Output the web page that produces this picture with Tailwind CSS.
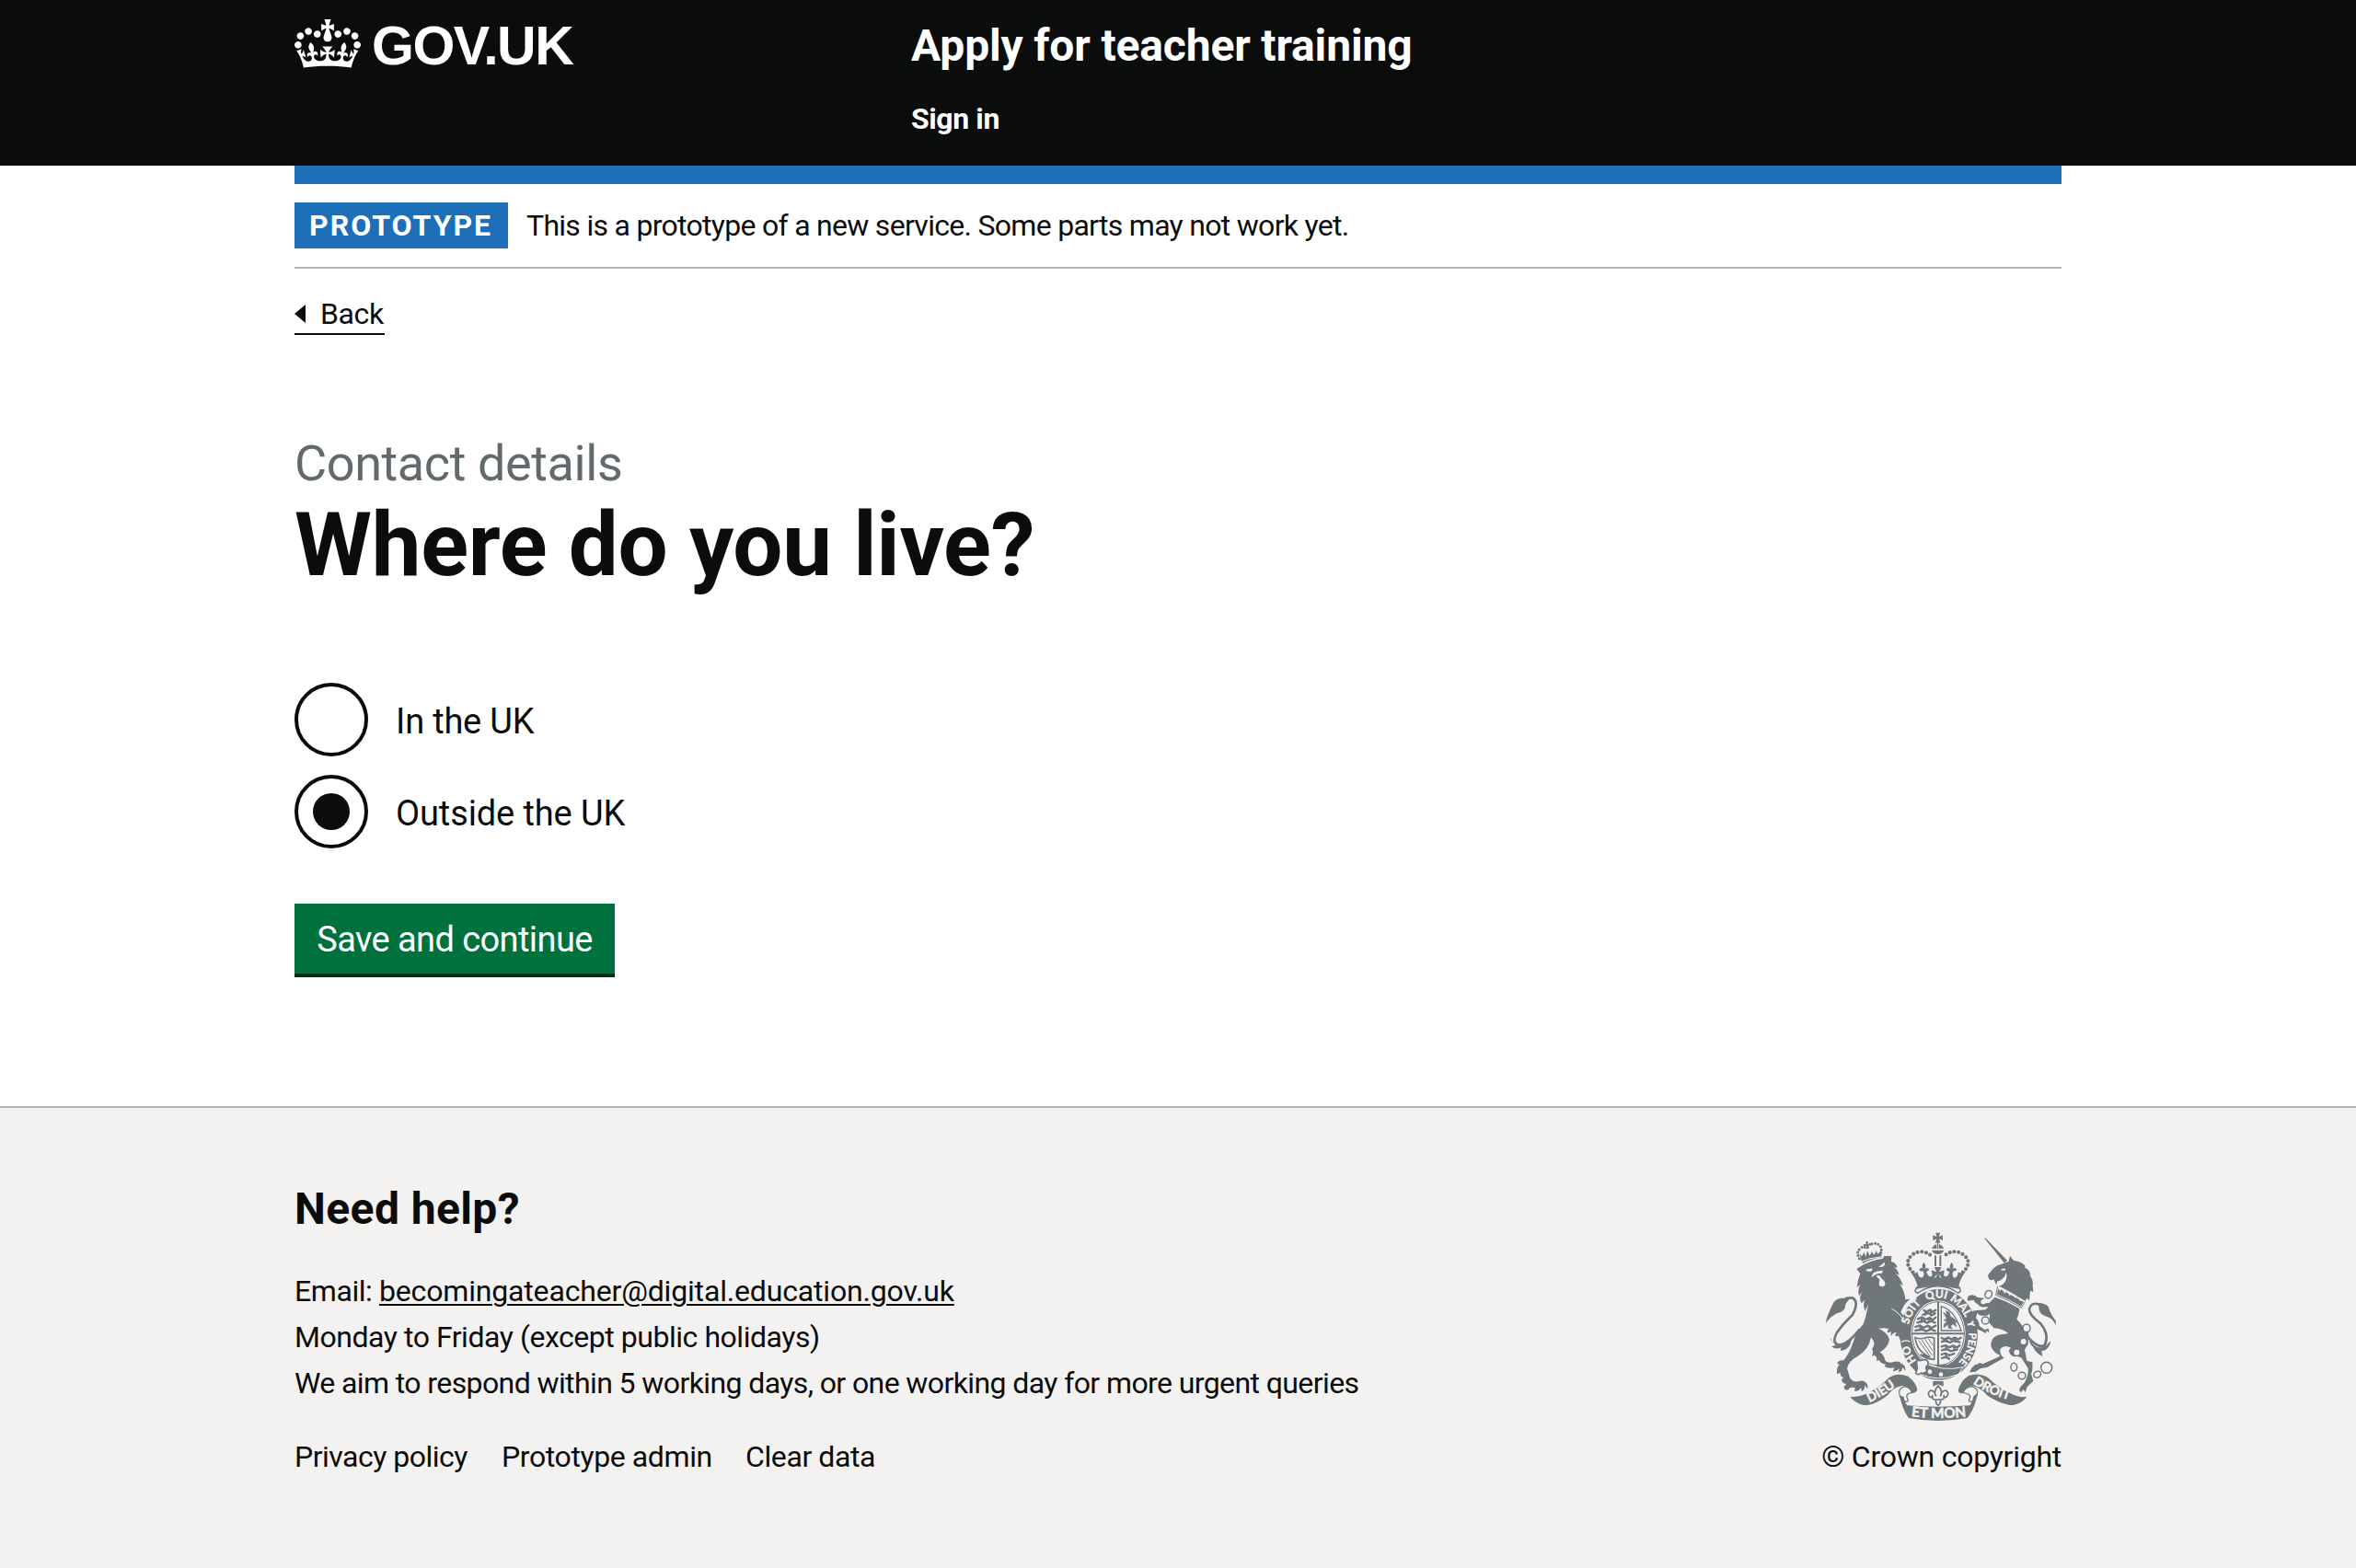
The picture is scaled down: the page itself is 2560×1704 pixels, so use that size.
<!DOCTYPE html>
<html lang="en">
<head>
<meta charset="utf-8">
<title>Where do you live? - Apply for teacher training</title>
<script src="https://cdn.jsdelivr.net/npm/@tailwindcss/browser@4"></script>
</head>
<body class="bg-[#f3f2f1] text-[#0b0c0c] font-['Roboto',sans-serif] text-[32px] leading-[50px]">
<header class="h-[180px] bg-[#0b0c0c] text-white">
  <div class="mx-auto flex w-[1920px]">
    <a class="flex h-[90px] w-[670px] items-start pt-[21px]">
      <svg class="h-[53px] w-[72px]" viewBox="0 0 132 97" fill="currentColor"><path d="M25 30.2c3.5 1.5 7.7-.2 9.1-3.7 1.5-3.6-.2-7.8-3.9-9.2-3.6-1.4-7.6.3-9.1 3.9-1.4 3.5.3 7.5 3.9 9zM9 39.5c3.6 1.5 7.8-.2 9.2-3.7 1.5-3.6-.2-7.8-3.9-9.1-3.6-1.5-7.6.2-9.1 3.8-1.4 3.5.3 7.5 3.8 9zM4.4 57.2c3.5 1.5 7.7-.2 9.1-3.8 1.5-3.6-.2-7.7-3.9-9.1-3.5-1.5-7.6.3-9.1 3.8-1.4 3.5.3 7.6 3.9 9.1zm38.3-21.4c3.5 1.5 7.7-.2 9.1-3.8 1.5-3.6-.2-7.7-3.9-9.1-3.6-1.5-7.6.3-9.1 3.8-1.3 3.6.4 7.7 3.9 9.1zm64.4-5.6c-3.6 1.5-7.8-.2-9.1-3.7-1.5-3.6.2-7.8 3.8-9.2 3.6-1.4 7.7.3 9.2 3.9 1.3 3.5-.4 7.5-3.9 9zm15.9 9.3c-3.6 1.5-7.7-.2-9.1-3.7-1.5-3.6.2-7.8 3.7-9.1 3.6-1.5 7.7.2 9.2 3.8 1.5 3.5-.3 7.5-3.8 9zm4.7 17.7c-3.6 1.5-7.8-.2-9.2-3.8-1.5-3.6.2-7.7 3.9-9.1 3.6-1.5 7.7.3 9.2 3.8 1.3 3.5-.4 7.6-3.9 9.1zM89.3 35.8c-3.6 1.5-7.8-.2-9.2-3.8-1.4-3.6.2-7.7 3.9-9.1 3.6-1.5 7.7.3 9.2 3.8 1.4 3.6-.3 7.7-3.9 9.1zM69.7 17.7l8.9 4.7V9.3l-8.9 2.8c-.2-.3-.5-.6-.9-.9L72.4 0H59.6l3.5 11.2c-.3.3-.6.5-.9.9l-8.8-2.8v13.1l8.8-4.7c.3.3.6.7.9.9l-5 15.4v.1c-.2.8-.4 1.6-.4 2.4 0 4.1 3.1 7.5 7 8.1h.2c.3 0 .7.1 1 .1.4 0 .7 0 1-.1h.2c4-.6 7.1-4.1 7.1-8.1 0-.8-.1-1.7-.4-2.4V34l-5.1-15.4c.4-.2.7-.6 1-.9zM66 92.8c16.9 0 32.8 1.1 47.1 3.2 4-16.9 8.9-26.7 14-33.5l-9.6-3.4c1 4.9 1.1 7.2 0 10.2-1.5-1.4-3-4.3-4.2-8.7L108.6 76c2.8-2 5-3.2 7.5-3.3-4.4 9.4-10 11.9-13.6 11.2-4.3-.8-6.3-4.6-5.6-7.9 1-4.7 5.7-5.9 8-.5 4.3-8.7-3-11.4-7.6-8.8 7.1-7.2 7.9-13.5 2.1-21.1-8 6.1-8.1 12.3-4.5 20.8-4.7-5.4-12.1-2.5-9.5 6.2 3.4-5.2 7.9-2 7.2 3.1-.6 4.3-6.4 7.8-13.5 7.2-10.3-.9-10.9-8-11.2-13.8 2.5-.5 7.1 1.8 11 7.3L80.2 60c-4.1 4.4-8 5.3-12.3 5.4 1.4-4.4 8-11.6 8-11.6H55.5s6.4 7.2 7.9 11.6c-4.2-.1-8-1-12.3-5.4l1.4 16.4c3.9-5.5 8.5-7.7 10.9-7.3-.3 5.8-.9 12.8-11.1 13.8-7.2.6-12.9-2.9-13.5-7.2-.7-5 3.8-8.3 7.1-3.1 2.7-8.7-4.6-11.6-9.4-6.2 3.7-8.5 3.6-14.7-4.6-20.8-5.8 7.6-5 13.9 2.2 21.1-4.7-2.6-11.9.1-7.7 8.8 2.3-5.5 7.1-4.2 8.1.5.7 3.3-1.3 7.1-5.7 7.9-3.5.7-9-1.8-13.5-11.2 2.5.1 4.7 1.3 7.5 3.3l-4.7-15.4c-1.2 4.4-2.7 7.2-4.3 8.7-1.1-3-.9-5.3 0-10.2l-9.5 3.4c5 6.9 9.9 16.7 14 33.5 14.8-2.1 30.8-3.2 47.7-3.2z"/></svg>
      <span class="ml-[12px] pt-[3px] font-['Liberation_Sans',sans-serif] text-[59px] leading-[52px] font-bold tracking-[-1.5px]">GOV.UK</span>
    </a>
    <div class="flex flex-col pt-[20px]">
      <a class="text-[48px] leading-[60px] font-bold tracking-[-0.16px]">Apply for teacher training</a>
      <a class="mt-[29px] leading-[40px] font-bold tracking-[-0.4px]">Sign in</a>
    </div>
  </div>
</header>
<main class="h-[1022px] bg-white">
  <div class="mx-auto flex w-[1920px] flex-col items-start">
    <div class="h-[20px] w-full bg-[#1d70b8]"></div>
    <div class="flex w-full border-b-2 border-[#b1b4b6] py-[20px]">
      <strong class="w-[232px] bg-[#1d70b8] pl-[16px] font-bold tracking-[2px] text-white">PROTOTYPE</strong>
      <span class="ml-[20px] tracking-[-0.71px]">This is a prototype of a new service. Some parts may not work yet.</span>
    </div>
    <a class="mt-[28px] flex h-[44px] w-[98px] items-center border-b-2 border-[#0b0c0c] leading-[42px]">
      <svg class="h-[20px] w-[12px]" viewBox="0 0 12 20"><path d="M0 10 12 0V20Z" fill="#0b0c0c"/></svg>
      <span class="ml-[16px] tracking-[-0.4px]">Back</span>
    </a>
    <span class="mt-[110px] text-[54px] leading-[60px] tracking-[-0.4px] text-[#626a6e]">Contact details</span>
    <h1 class="mt-[8px] text-[96px] leading-[100px] font-bold tracking-[-0.3px]">Where do you live?</h1>
    <div class="mt-[100px] flex flex-col gap-[20px] text-[38px]">
      <label class="flex h-[80px] items-center">
        <span class="size-[80px] rounded-full border-4 border-[#0b0c0c]"></span>
        <span class="ml-[30px] pt-[3px] tracking-[-0.2px]">In the UK</span>
      </label>
      <label class="flex h-[80px] items-center">
        <span class="flex size-[80px] items-center justify-center rounded-full border-4 border-[#0b0c0c]"><span class="size-[40px] rounded-full bg-[#0b0c0c]"></span></span>
        <span class="ml-[30px] pt-[3px] tracking-[-0.12px]">Outside the UK</span>
      </label>
    </div>
    <button class="mt-[60px] h-[80px] w-[348px] border-b-4 border-[#002d18] bg-[#00703c] pt-[2px] text-[38px] tracking-[-0.58px] text-white">Save and continue</button>
  </div>
</main>
<footer class="h-[502px] border-t-2 border-[#b1b4b6] pt-[80px]">
  <div class="mx-auto flex w-[1920px] justify-between">
    <div>
      <h2 class="text-[48px] leading-[60px] font-bold tracking-[0.4px]">Need help?</h2>
      <p class="mt-[34px] flex tracking-[-0.17px]"><span class="w-[92px] tracking-[-0.42px]">Email:</span><a class="underline decoration-2 underline-offset-[3px]">becomingateacher@digital.education.gov.uk</a></p>
      <p class="tracking-[-0.46px]">Monday to Friday (except public holidays)</p>
      <p class="tracking-[-0.6px]">We aim to respond within 5 working days, or one working day for more urgent queries</p>
      <div class="mt-[30px] flex">
        <a class="w-[225px] tracking-[-0.5px]">Privacy policy</a>
        <a class="w-[265px] tracking-[-0.4px]">Prototype admin</a>
        <a class="tracking-[-0.4px]">Clear data</a>
      </div>
    </div>
    <div class="flex flex-col items-end pt-[56px]">
      <!-- Royal coat of arms -->
      <svg class="mr-[6px] h-[204px] w-[250px] overflow-visible font-['Lato',sans-serif] font-bold" viewBox="72 60 750 612" fill="#6f777b">
        <!-- lion's crown -->
        <g>
          <path d="M185 146Q216 130 251 125L255 139Q222 144 193 158Z"/>
          <path d="M188 148 180 126 190 136 196 122 202 138 207 118 215 134 222 120 229 134 236 117 241 130 252 116 250 132Z"/>
          <path d="M202 88 210 87 208 96 217 92 220 101 211 100 213 110 203 112 205 102 196 105 194 96 203 97Z"/>
          <g stroke="#6f777b" stroke-width="9" stroke-linecap="round" fill="none" stroke-dasharray="0 10.5"><path d="M181 143Q168 122 186 109Q196 100 205 112"/><path d="M222 95Q240 90 250 104Q256 114 250 128"/></g>
        </g>
        <!-- lion -->
        <path d="M172 177 195 163Q228 146 258 143L262 135 286 135 285 153Q301 156 305 173L294 171Q308 181 311 197L299 191Q319 210 323 232L312 225Q329 248 331 277L347 275Q327 288 316 318Q340 345 346 376Q351 396 347 412Q342 414 340 406Q331 416 318 414L324 406Q312 404 311 392Q303 402 297 392L303 384Q290 384 284 397L284 380Q276 387 272 383L276 372Q262 368 244 371Q275 385 279 407Q276 432 248 448Q262 458 266 477Q277 485 293 480Q312 476 318 486Q333 490 331 510L323 497Q320 512 309 514L311 502Q301 513 291 509L295 499Q275 503 263 495L267 488Q252 487 245 474L237 478Q241 463 229 458L222 463Q228 446 222 438Q238 420 219 400Q212 440 175 462Q147 477 141 500L150 531Q157 546 176 544Q190 538 199 545Q211 552 207 568L199 556Q199 573 188 576L187 563Q178 579 164 574L168 565Q148 560 147 569Q132 577 131 561L139 552Q124 550 123 536L131 531Q117 528 119 515L108 520Q106 498 116 489L109 486Q111 474 130 475Q151 448 160 418Q174 376 194 357Q204 330 210 291L200 314Q190 294 200 277L188 289Q178 272 190 252L180 264Q174 248 184 229L173 237Q175 212 184 192Z"/>
        <g fill="#f3f2f1"><path d="M201 179 222 175Q226 186 215 185Q205 186 201 179ZM244 171 263 155Q267 166 257 170ZM226 190Q240 181 258 182L253 193Q242 188 234 196L220 205ZM236 199Q247 193 252 207Q269 219 264 230Q257 239 246 230Q244 221 248 211Q240 209 236 199Z"/></g>
        <path d="M174 158Q216 139 257 137" stroke="#f3f2f1" stroke-width="3" fill="none"/>
        <!-- lion's tail -->
        <path d="M131 282Q159 260 169 283Q174 298 159 326Q128 355 108 384Q88 423 119 425Q148 419 182 374" stroke="#6f777b" stroke-width="8" fill="none"/>
        <path d="M150 272Q141 263 131 273Q112 270 98 285Q88 302 74 340L72 354Q84 335 108 322Q137 316 136 292ZM95 414Q86 411 88 401Q92 421 109 421Q138 421 156 405L151 424Q139 445 119 443L122 433Q105 442 90 430Q100 429 105 424Z"/>
        <!-- royal crown -->
        <g>
          <path d="M430 59H444L441 72 453 67V84L441 79 445 92H429L433 79 421 84V67L433 72Z"/>
          <path d="M435 93H439V112H435ZM417 110Q422 100 433 96V111ZM457 110Q452 100 441 96V111ZM417 116H457Q451 129 437 129Q423 129 417 116ZM426 133H432V168H426ZM442 133H448V168H442Z"/>
          <path d="M371 232Q364 208 344 181L360 193 371 187Q373 207 386 205Q396 198 388 184Q381 187 376 179Q382 168 389 177Q382 166 391 156Q401 166 395 178Q403 169 409 179Q403 187 399 185Q407 208 419 199L416 181 433 187 425 171H449L441 187 458 181 456 199Q469 208 475 185Q467 187 464 179Q470 169 478 177Q473 166 482 156Q492 168 484 178Q492 169 499 179Q494 186 488 184Q481 199 490 206Q502 206 503 187L516 193 531 181Q510 207 505 232L512 240Q437 221 363 240Z"/>
          <path d="M424 208 435 193 431 204ZM450 208 439 193 443 204Z" fill="#f3f2f1"/>
          <g stroke="#6f777b" stroke-width="12.5" stroke-linecap="round" fill="none" stroke-dasharray="0 14.3"><path d="M356 188Q322 155 356 129Q385 111 413 132"/><path d="M518 188Q554 155 518 129Q490 111 461 132"/></g>
          <path d="M371 256Q358 252 367 240Q437 223 507 240Q516 252 502 255Q470 232 437 233Q404 232 371 256Z" fill="#f3f2f1" stroke="#6f777b" stroke-width="4.5"/>
        </g>
        <!-- garter -->
        <ellipse cx="440" cy="391" rx="127" ry="148"/>
        <path d="M282 303Q330 325 346 376Q351 396 347 412L318 416 302 380Z"/>
        <path d="M286 306Q318 324 330 354" stroke="#f3f2f1" stroke-width="3" fill="none"/>
        <path d="M318 416Q328 406 346 414" stroke="#f3f2f1" stroke-width="4" fill="none"/>
        <ellipse cx="438" cy="388" rx="89" ry="108" fill="#f3f2f1"/>
        <defs>
          <path id="belt" d="M438 511A100 120 0 0 1 338 391A100 120 0 0 1 438 271A100 120 0 0 1 538 391A100 120 0 0 1 438 511" pathLength="360"/>
          <path id="dieu" d="M214 612Q264 590 316 548"/>
          <path id="droit" d="M551 549Q594 584 682 608"/>
          <path id="mon" d="M350 658Q437 668 527 658"/>
        </defs>
        <g fill="#f3f2f1" stroke="#f3f2f1" stroke-width="1.2" font-size="36" text-anchor="middle">
          <text><textPath href="#belt" startOffset="57">HO</textPath></text>
          <text><textPath href="#belt" startOffset="128">SOIT</textPath></text>
          <text><textPath href="#belt" startOffset="177">QUI</textPath></text>
          <text><textPath href="#belt" startOffset="220">MAL</textPath></text>
          <text><textPath href="#belt" startOffset="253">Y</textPath></text>
          <text font-size="34"><textPath href="#belt" startOffset="294">PENSE</textPath></text>
        </g>
        <!-- quartered shield -->
        <g fill="none" stroke="#6f777b">
          <ellipse cx="438" cy="388" rx="85" ry="104" stroke-width="3"/>
          <path d="M438 284V490" stroke-width="6"/><path d="M352 388H524" stroke-width="6"/>
          <g stroke-width="7" stroke-linecap="round" stroke-linejoin="round">
            <path d="M391 312 402 316 412 310 420 317 430 311M388 326 408 321 418 328 428 322M372 340 386 334 396 342 410 336 420 343 430 335M370 352 388 346 402 353 414 347 428 352M364 366 378 361 390 369 404 362 416 369 430 362M364 378 384 374 398 380 414 374 428 379M396 314V326M414 312V328M384 338V350M408 338V350M380 364V376M410 364V376"/>
            <path d="M449 402 460 406 472 400 480 407 492 401 504 407 512 401M450 414 464 411 476 417 490 411 508 416M449 430 462 426 474 433 486 427 500 433 508 426M450 442 466 438 478 445 500 440M449 456 462 452 474 459 490 453M450 468 462 464 474 470M466 403V414M494 403V414M464 430V440M490 430V442M464 454V466"/>
          </g>
          <path d="M448 299Q490 310 513 378H448Z" stroke-width="4"/>
          <path d="M455 318 466 326 464 314 474 318 478 332 490 340 500 352 492 350 498 366 486 356 478 364 484 372 472 370 470 358 456 368 458 356 468 348 456 344 466 340Z" fill="#6f777b" stroke-width="2"/>
          <path d="M363 401Q380 407 395 402 408 397 425 402V472Q396 470 380 456L410 464Q368 446 363 401Z" stroke-width="5"/>
          <path d="M374 410 414 466M384 408 418 458M395 406 420 444M406 404 421 426" stroke-width="3"/>
        </g>
        <!-- buckle -->
        <path d="M380 478Q450 514 520 497L504 520Q440 548 373 518Z" stroke="#f3f2f1" stroke-width="3"/>
        <path d="M368 484Q364 473 378 476L396 472Q409 478 404 490L398 497 401 510Q394 520 382 516Q372 526 365 516L370 502Z" fill="#f3f2f1" stroke="#6f777b" stroke-width="5"/>
        <circle cx="411" cy="512" r="7" fill="#f3f2f1"/><circle cx="447" cy="521" r="7" fill="#f3f2f1"/>
        <path d="M426 488H466L458 496H434Z"/>
        <!-- fleur-de-lis -->
        <path d="M421 543H455V560L438 553 421 560Z"/>
        <path d="M438 558Q455 576 445 592Q451 571 464 574Q474 580 467 592Q460 601 456 588Q460 604 446 603H430Q416 604 420 588Q416 601 409 592Q402 580 412 574Q425 571 431 592Q421 576 438 558ZM431 604Q429 617 438 622Q447 617 445 604" fill="#f3f2f1" stroke="#6f777b" stroke-width="5"/>
        <!-- motto ribbon -->
        <path d="M150 593Q180 597 213 580Q250 560 278 531Q305 513 340 527Q369 550 370 573Q360 585 352 581Q334 551 312 560Q292 564 274 588Q240 616 207 621H196Q172 617 150 593Z"/>
        <path d="M728 593Q700 599 668 580Q632 563 600 531Q571 513 537 525Q508 545 503 575Q510 586 519 581Q533 551 559 560Q580 568 599 590Q640 616 672 621H683Q709 616 728 593Z"/>
        <path d="M329 560Q306 566 312 587Q318 606 334 610Q344 609 337 598Q330 584 352 580Q347 563 329 560ZM547 560Q571 566 565 587Q559 606 544 610Q534 609 541 598Q548 586 519 580Q526 563 547 560Z" fill="#f3f2f1" stroke="#6f777b" stroke-width="4"/>
        <path d="M326 594Q327 610 337 622Q437 630 541 622Q551 610 552 594L567 580Q558 632 533 663Q437 681 342 663Q322 637 312 589Z"/>
        <g fill="#f3f2f1" stroke="#f3f2f1" stroke-width="1.5">
          <text font-size="42"><textPath href="#dieu">DIEU</textPath></text>
          <text font-size="42"><textPath href="#droit">DROIT</textPath></text>
          <text font-size="46"><textPath href="#mon">ET MON</textPath></text>
        </g>
        <!-- unicorn -->
        <path d="M587 75 594 78 663 149 654 158Z"/>
        <path d="M601 202Q598 197 609 186Q622 168 640 163L668 153 672 134 684 149Q712 153 723 169L718 171Q738 180 739 199L734 196Q749 211 746 231L748 252 738 248 735 281Q727 266 722 283Q680 254 634 232L649 225Q663 209 660 188Q656 206 637 216Q628 214 628 230L619 211 612 214Q602 213 601 202Z"/>
        <path d="M641 181Q649 172 658 177L655 182ZM659 188Q667 209 649 227Q634 235 631 232Q659 216 659 188Z" fill="#f3f2f1"/>
        <path d="M631 237 640 249 645 240 655 257 662 247 671 265 679 256 688 272 697 264 703 280 721 284 711 304Q674 284 626 263Z"/>
        <path d="M634 236 722 284" stroke="#f3f2f1" stroke-width="5" fill="none"/>
        <path d="M632 234 626 262Q670 279 709 304L721 284" stroke="#f3f2f1" stroke-width="7" fill="none"/>
        <path d="M632 234 626 262Q670 279 709 304L721 284" stroke="#6f777b" stroke-width="3" fill="none"/>
        <path d="M623 269Q668 285 703 307Q702 325 694 341Q714 359 725 386Q734 400 731 422L720 440Q724 458 727 477L745 481Q747 510 741 520L748 542 728 562 722 580 716 570 709 578Q699 579 705 563L720 547Q734 521 731 501Q718 481 710 467Q697 460 690 463Q673 462 668 443L675 434Q655 423 640 438Q640 462 653 467Q628 480 599 497L575 502 560 512 540 514Q545 499 558 489L566 488Q571 480 583 487L633 465 640 459Q616 447 610 429Q609 392 650 390L667 387Q648 372 620 370L605 353 606 323 597 329 576 329 565 321 561 337Q571 346 572 362L589 375 602 371 604 385 595 378 594 387 577 378Q557 373 558 359L551 342 547 321Q549 312 563 312L592 310 602 300Q575 305 569 293Q555 286 554 278L535 281Q530 270 540 263Q557 258 565 269L586 272 590 289 604 288Z"/>
        <!-- unicorn's tail -->
        <path d="M766 292Q741 285 735 307Q733 326 771 354Q801 389 786 425Q767 439 731 400L725 372" stroke="#6f777b" stroke-width="8" fill="none"/>
        <path d="M758 289Q779 285 797 299Q803 322 821 346L822 360Q808 335 791 332Q765 325 766 299ZM734 404Q744 424 764 433Q788 434 797 419L805 412Q803 430 788 441L775 445 778 462Q754 449 748 432Q736 423 734 404Z"/>
        <!-- chain -->
        <g fill="#f3f2f1" stroke="#6f777b" stroke-width="4.5">
          <ellipse cx="602" cy="260" rx="11" ry="13" transform="rotate(25 602 260)"/><ellipse cx="592" cy="345" rx="12" ry="12"/><ellipse cx="726" cy="370" rx="12" ry="13"/><ellipse cx="685" cy="497" rx="10" ry="13"/><ellipse cx="711" cy="525" rx="12" ry="11"/><ellipse cx="761" cy="521" rx="12" ry="10" transform="rotate(-30 761 521)"/><circle cx="791" cy="499" r="18"/>
        </g>
        <g fill="#f3f2f1"><circle cx="585" cy="284" r="8"/><circle cx="716" cy="414" r="9"/><circle cx="694" cy="449" r="9"/></g>
      </svg>
      <a class="mt-[14px] tracking-[-0.25px]">© Crown copyright</a>
    </div>
  </div>
</footer>
</body>
</html>
